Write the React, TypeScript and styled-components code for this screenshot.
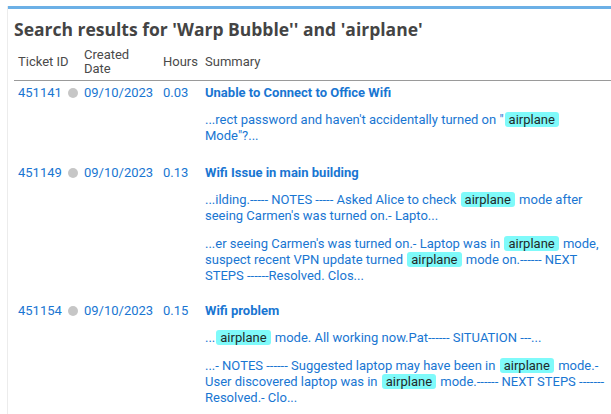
import React from "react";
import styled, { createGlobalStyle } from "styled-components";

const GlobalStyle = createGlobalStyle`
  html, body { margin: 0; padding: 0; background: #ffffff; }
  body { font-family: Roboto, "Liberation Sans", Arial, sans-serif; }
`;

const Panel = styled.div`
  margin: 6px 0 0 7px;
  border-left: 1px solid #ececec;
  min-height: calc(100vh - 6px);
  box-sizing: border-box;
`;

const TopBar = styled.div`
  height: 3px;
  background: #6cb0e6;
`;

const Content = styled.div`
  padding-left: 6px;
`;

const Heading = styled.h2`
  margin: 9px 0 1px 0;
  font-family: "Open Sans", "Liberation Sans", Arial, sans-serif;
  font-weight: 700;
  font-size: 17.5px;
  line-height: 23px;
  color: #444444;
  white-space: nowrap;
`;

const Grid = styled.div`
  display: grid;
  grid-template-columns: 66px 79px 42px 1fr;
`;

const HeadCell = styled.div`
  padding: 6px 4px 4px 4px;
  font-size: 13px;
  line-height: 14px;
  color: #4a4a4a;
  border-bottom: 1px solid #9a9a9a;
  display: flex;
  align-items: center;
`;

const Cell = styled.div<{ $pb: number }>`
  padding: 4px 4px ${(p) => p.$pb}px 4px;
  font-size: 13px;
  line-height: 16px;
  color: #1976d2;
`;

const IdWrap = styled.div`
  display: flex;
  align-items: center;
  gap: 6px;
  white-space: nowrap;
`;

const Dot = styled.span`
  width: 10px;
  height: 10px;
  border-radius: 50%;
  background: #c6c6c6;
  flex: none;
`;

const Title = styled.div`
  font-weight: 700;
  color: #1976d2;
`;

const Snippets = styled.div`
  margin-top: 11px;
  display: flex;
  flex-direction: column;
  gap: 12px;
`;

const Snippet = styled.div`
  line-height: 16px;
`;

const Mark = styled.span`
  background: #7ffafa;
  color: #1f2a2a;
  padding: 0 4px;
  margin: 0 1px;
  border-radius: 3px;
`;

type Part = string | { hl: string };

type Ticket = {
  id: string;
  date: string;
  hours: string;
  title: string;
  pb: number;
  snippets: Part[][];
};

const hl = (t: string): Part => ({ hl: t });

const tickets: Ticket[] = [
  {
    id: "451141",
    date: "09/10/2023",
    hours: "0.03",
    title: "Unable to Connect to Office Wifi",
    pb: 17,
    snippets: [
      [
        "...rect password and haven't accidentally turned on \"",
        hl("airplane"),
        " Mode\"?...",
      ],
    ],
  },
  {
    id: "451149",
    date: "09/10/2023",
    hours: "0.13",
    title: "Wifi Issue in main building",
    pb: 15,
    snippets: [
      [
        "...ilding.----- NOTES ----- Asked Alice to check ",
        hl("airplane"),
        " mode after seeing Carmen's was turned on.- Lapto...",
      ],
      [
        "...er seeing Carmen's was turned on.- Laptop was in ",
        hl("airplane"),
        " mode, suspect recent VPN update turned ",
        hl("airplane"),
        " mode on.------ NEXT STEPS ------Resolved. Clos...",
      ],
    ],
  },
  {
    id: "451154",
    date: "09/10/2023",
    hours: "0.15",
    title: "Wifi problem",
    pb: 16,
    snippets: [
      ["...", hl("airplane"), " mode. All working now.Pat------ SITUATION ---..."],
      [
        "...- NOTES ------ Suggested laptop may have been in ",
        hl("airplane"),
        " mode.- User discovered laptop was in ",
        hl("airplane"),
        " mode.------ NEXT STEPS -------Resolved.- Clo...",
      ],
    ],
  },
];

export default function App() {
  return (
    <>
      <GlobalStyle />
      <Panel>
        <TopBar />
        <Content>
          <Heading>Search results for 'Warp Bubble'' and 'airplane'</Heading>
          <Grid>
            <HeadCell>Ticket ID</HeadCell>
            <HeadCell>Created Date</HeadCell>
            <HeadCell>Hours</HeadCell>
            <HeadCell>Summary</HeadCell>
            {tickets.map((t) => (
              <React.Fragment key={t.id}>
                <Cell $pb={t.pb}>
                  <IdWrap>
                    {t.id}
                    <Dot />
                  </IdWrap>
                </Cell>
                <Cell $pb={t.pb}>{t.date}</Cell>
                <Cell $pb={t.pb}>{t.hours}</Cell>
                <Cell $pb={t.pb}>
                  <Title>{t.title}</Title>
                  <Snippets>
                    {t.snippets.map((s, i) => (
                      <Snippet key={i}>
                        {s.map((p, j) =>
                          typeof p === "string" ? (
                            <React.Fragment key={j}>{p}</React.Fragment>
                          ) : (
                            <Mark key={j}>{p.hl}</Mark>
                          )
                        )}
                      </Snippet>
                    ))}
                  </Snippets>
                </Cell>
              </React.Fragment>
            ))}
          </Grid>
        </Content>
      </Panel>
    </>
  );
}
